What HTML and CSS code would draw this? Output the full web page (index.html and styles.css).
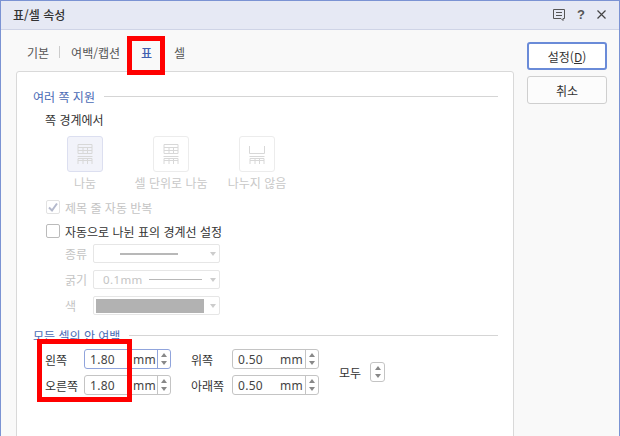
FILE: index.html
```html
<!DOCTYPE html>
<html lang="ko">
<head>
    <meta charset="UTF-8">
    <title>표/셀 속성</title>
    <link rel="stylesheet" href="styles.css">
</head>
<body>
<div class="window">
    <div class="titlebar">
        <span class="title">표/셀 속성</span>
        <div class="title-icons">
            <svg width="14" height="14" viewBox="0 0 14 14"><path d="M1.500 1.500h11v9h-1.500v2l-2-2h-7.500z M4 4.500h6 M4 7.500h6" fill="none" stroke="#555" stroke-width="1"/></svg>
            <span class="help">?</span>
            <svg width="11" height="11" viewBox="0 0 11 11"><path d="M1.500 1.500l8 8M9.500 1.500l-8 8" fill="none" stroke="#444" stroke-width="1.200"/></svg>
        </div>
    </div>
    <div class="content">
        <div class="left">
            <div class="tabs">
                <span class="tab tab-first">기본</span>
                <span class="tab-sep"></span>
                <span class="tab tab-margin">여백/캡션</span>
                <span class="tab tab-table">표</span>
                <span class="tab tab-cell">셀</span>
            </div>
            <div class="panel">
                <div class="group-head"><span>여러 쪽 지원</span><i></i></div>
                <div class="sub-title">쪽 경계에서</div>
                <div class="split-row">
                    <div class="split-opt">
                        <div class="split-icon selected">
                            <svg width="22" height="22" viewBox="0 0 22 22"><use href="#tbl-top"/><use href="#tbl-bot"/></svg>
                        </div>
                        <span>나눔</span>
                    </div>
                    <div class="split-opt">
                        <div class="split-icon">
                            <svg width="22" height="22" viewBox="0 0 22 22"><use href="#tbl-top"/><use href="#tbl-bot"/></svg>
                        </div>
                        <span>셀 단위로 나눔</span>
                    </div>
                    <div class="split-opt">
                        <div class="split-icon">
                            <svg width="22" height="22" viewBox="0 0 22 22"><path d="M3.500 3v7.500h15V3" fill="none" stroke="#d8d8d8"/><use href="#tbl-bot"/></svg>
                        </div>
                        <span>나누지 않음</span>
                    </div>
                </div>
                <label class="check disabled">
                    <span class="box">
                        <svg width="12" height="12" viewBox="0 0 12 12"><path d="M2 6.500l3 3 5-7" fill="none" stroke="#b4b9cc" stroke-width="2"/></svg>
                    </span>
                    제목 줄 자동 반복
                </label>
                <label class="check">
                    <span class="box"></span>
                    자동으로 나뉜 표의 경계선 설정
                </label>
                <div class="line-rows">
                    <div class="line-row">
                        <span class="line-label">종류</span>
                        <div class="select">
                            <span class="line-kind"></span>
                            <span class="arrow"></span>
                        </div>
                    </div>
                    <div class="line-row">
                        <span class="line-label">굵기</span>
                        <div class="select">
                            <span class="thick-val">0.1mm</span>
                            <span class="thick-line"></span>
                            <span class="arrow"></span>
                        </div>
                    </div>
                    <div class="line-row">
                        <span class="line-label">색</span>
                        <div class="select select-color">
                            <span class="swatch"></span>
                            <span class="arrow"></span>
                        </div>
                    </div>
                </div>
                <div class="group-head group-margin"><span>모든 셀의 안 여백</span><i></i></div>
                <div class="margin-grid">
                    <div class="margin-col col-left">
                        <div class="margin-row">
                            <span class="m-label">왼쪽</span>
                            <div class="spin focused">
                                <span class="val">1.80</span><span class="unit">mm</span>
                                <span class="spin-btns"><b class="up"></b><b class="down"></b></span>
                            </div>
                        </div>
                        <div class="margin-row">
                            <span class="m-label">오른쪽</span>
                            <div class="spin">
                                <span class="val">1.80</span><span class="unit">mm</span>
                                <span class="spin-btns"><b class="up"></b><b class="down"></b></span>
                            </div>
                        </div>
                    </div>
                    <div class="margin-col col-right">
                        <div class="margin-row">
                            <span class="m-label">위쪽</span>
                            <div class="spin">
                                <span class="val">0.50</span><span class="unit">mm</span>
                                <span class="spin-btns"><b class="up"></b><b class="down"></b></span>
                            </div>
                        </div>
                        <div class="margin-row">
                            <span class="m-label">아래쪽</span>
                            <div class="spin">
                                <span class="val">0.50</span><span class="unit">mm</span>
                                <span class="spin-btns"><b class="up"></b><b class="down"></b></span>
                            </div>
                        </div>
                    </div>
                    <div class="all-box">
                        <span>모두</span>
                        <span class="spin-btns spin-alone"><b class="up"></b><b class="down"></b></span>
                    </div>
                </div>
            </div>
        </div>
        <div class="right">
            <div class="btn btn-main">설정(<u>D</u>)</div>
            <div class="btn">취소</div>
        </div>
    </div>
    <!-- 빨간 강조 박스 -->
    <div class="mark mark-tab"></div>
    <div class="mark mark-left"></div>
</div>
<svg width="0" height="0" class="defs">
    <defs>
        <g id="tbl-top" fill="none" stroke="#d8d8d8"><path d="M4 1.500h14v9H4z M4 4.500h14 M4 7.500h14 M9 4.500v6 M13.500 4.500v6"/></g>
        <g id="tbl-bot" fill="none" stroke="#d8d8d8"><path d="M3.500 13.500h15 M4 15.500h14 M4 17.500h14 M4 15.500v5.500 M9 15.500v5.500 M13.500 15.500v5.500 M18 15.500v5.500"/></g>
    </defs>
</svg>
</body>
</html>
```

FILE: styles.css
```css
* {
    box-sizing: border-box;
}
body {
    margin: 0;
    font-family: "Noto Sans CJK KR", "Noto Sans", sans-serif;
    font-size: 12px;
    color: #333;
}
.defs {
    position: absolute;
}
.window {
    position: relative;
    width: 620px;
    height: 436px;
    overflow: hidden;
    background-color: #f9f9f9;
    border: 1px solid #7b93d3;
    border-bottom: 0;
}
.titlebar {
    display: flex;
    justify-content: space-between;
    align-items: center;
    height: 29px;
    padding: 0 12px 1px 12px;
    background-color: #e6e9f4;
    border-bottom: 1px solid #cfd4e6;
}
.title {
    font-size: 12px;
    font-weight: 500;
    color: #333;
}
.title-icons {
    display: flex;
    align-items: center;
    gap: 11px;
}
.help {
    font-family: "Liberation Sans", sans-serif;
    font-size: 13px;
    font-weight: bold;
    color: #555;
}
.content {
    display: flex;
    height: 406px;
}
.left {
    width: 513px;
    padding-left: 15px;
}
.tabs {
    display: flex;
    align-items: center;
    height: 41px;
    padding: 3px 0 0 11px;
}
.tab {
    font-size: 12px;
    color: #555;
}
.tab-sep {
    width: 1px;
    height: 12px;
    margin: 0 11px 0 10px;
    background-color: #ccc;
}
.tab-table {
    margin-left: 21px;
    color: #3f5fb0;
    font-weight: 500;
}
.tab-cell {
    margin-left: 22px;
}
.panel {
    height: 380px;
    padding: 14px 15px 0 16px;
    background-color: #fff;
    border: 1px solid #d9d9d9;
    border-radius: 3px;
}
.group-head {
    display: flex;
    align-items: center;
    gap: 9px;
    height: 20px;
    color: #4a6bb5;
}
.group-head i {
    flex: 1;
    height: 1px;
    background-color: #d5d5d5;
}
.group-margin {
    margin-top: 10px;
}
.sub-title {
    height: 18px;
    margin-top: 5px;
    margin-left: 12px;
    line-height: 18px;
}
.split-row {
    display: flex;
    margin-top: 7px;
    height: 56px;
}
.split-opt {
    display: flex;
    flex-direction: column;
    align-items: center;
    width: 86px;
    flex-shrink: 0;
    font-size: 12px;
    white-space: nowrap;
    color: #c8c8c8;
}
.split-opt:first-child {
    margin-left: 9px;
}
.split-icon {
    display: flex;
    align-items: center;
    justify-content: center;
    width: 36px;
    height: 36px;
    margin-bottom: 2px;
    border: 1px solid #ececec;
    border-radius: 3px;
}
.split-icon.selected {
    background-color: #f2f3fa;
    border-color: #dcdff0;
}
.check {
    display: flex;
    align-items: center;
    gap: 5px;
    height: 24px;
    margin-left: 13px;
    color: #333;
}
.check.disabled {
    margin-top: 3px;
    color: #c4c4c4;
}
.box {
    display: flex;
    align-items: center;
    justify-content: center;
    width: 14px;
    height: 14px;
    background-color: #fff;
    border: 1px solid #bbb;
    border-radius: 2px;
}
.disabled .box {
    border-color: #e2e2e2;
}
.line-rows {
    display: flex;
    flex-direction: column;
    gap: 7px;
    margin-left: 32px;
    margin-top: 1px;
}
.line-row {
    display: flex;
    align-items: center;
    height: 19px;
    color: #c4c4c4;
}
.line-label {
    width: 28px;
}
.select {
    display: flex;
    align-items: center;
    position: relative;
    width: 127px;
    height: 19px;
    padding-left: 9px;
    border: 1px solid #e6e6e6;
    border-radius: 2px;
    font-size: 12px;
}
.line-kind {
    width: 58px;
    height: 2px;
    margin-left: 17px;
    background-color: #b8b8b8;
}
.thick-val {
    font-family: "Noto Sans", sans-serif;
    font-size: 11.500px;
    letter-spacing: 0.400px;
    color: #c4c4c4;
}
.thick-line {
    width: 53px;
    height: 1px;
    margin-left: 6px;
    background-color: #b8b8b8;
}
.select-color {
    padding-left: 2px;
}
.swatch {
    width: 108px;
    height: 14px;
    background-color: #b2b2b2;
}
.arrow {
    position: absolute;
    right: 3px;
    top: 7px;
    border: 3px solid transparent;
    border-top: 4px solid #ccc;
    border-bottom: 0;
}
.margin-grid {
    display: flex;
    margin-top: 4px;
}
.margin-col {
    display: flex;
    flex-direction: column;
    gap: 6px;
}
.col-left {
    width: 158px;
    padding-left: 12px;
}
.col-right {
    width: 148px;
}
.margin-row {
    display: flex;
    align-items: center;
    height: 20px;
}
.m-label {
    width: 39px;
    color: #333;
    white-space: nowrap;
}
.col-right .m-label {
    width: 41px;
}
.spin {
    display: flex;
    align-items: center;
    position: relative;
    width: 87px;
    height: 20px;
    padding-left: 5px;
    font-family: "Noto Sans", sans-serif;
    font-size: 12px;
    letter-spacing: 0.300px;
    background-color: #fff;
    border: 1px solid #c4c4c4;
    border-radius: 3px;
}
.spin.focused {
    border-color: #90a4dc;
}
.val {
    width: 43px;
    color: #444;
}
.unit {
    width: 26px;
    color: #444;
    font-size: 12px;
    letter-spacing: 0.200px;
}
.col-right .val {
    width: 42px;
}
.col-right .unit {
    width: 24px;
}
.spin-btns {
    display: flex;
    flex-direction: column;
    align-items: center;
    justify-content: center;
    gap: 4px;
    position: absolute;
    right: 0;
    top: 0;
    bottom: 0;
    width: 13px;
    border-left: 1px solid #c4c4c4;
}
.focused .spin-btns {
    border-left-color: #90a4dc;
}
.up {
    border: 3px solid transparent;
    border-bottom: 4px solid #888;
    border-top: 0;
}
.down {
    border: 3px solid transparent;
    border-top: 4px solid #888;
    border-bottom: 0;
}
.all-box {
    display: flex;
    align-items: center;
    gap: 9px;
    height: 46px;
}
.spin-alone {
    position: static;
    width: 15px;
    height: 20px;
    background-color: #fff;
    border: 1px solid #c4c4c4;
    border-radius: 3px;
}
.right {
    display: flex;
    flex-direction: column;
    gap: 6px;
    padding: 12px 0 0 13px;
}
.btn {
    display: flex;
    align-items: center;
    justify-content: center;
    width: 80px;
    height: 28px;
    background-color: #fcfcfc;
    border: 1px solid #cfcfcf;
    border-radius: 3px;
}
.btn-main {
    background-color: #fff;
    border: 2px solid #6a8bd8;
}
.mark {
    position: absolute;
    border: 5px solid #f00;
}
.mark-tab {
    left: 126px;
    top: 35px;
    width: 38px;
    height: 39px;
}
.mark-left {
    left: 36px;
    top: 338px;
    width: 95px;
    height: 63px;
}
```
